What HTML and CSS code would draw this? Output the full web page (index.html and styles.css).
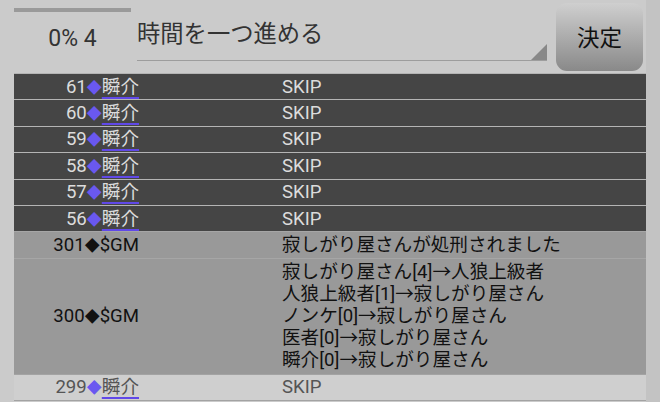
FILE: index.html
```html
<!DOCTYPE html>
<html lang="ja">
<head>
    <meta charset="UTF-8">
    <meta name="viewport" content="width=device-width, initial-scale=1.0">
    <title>ログ</title>
    <link rel="stylesheet" href="styles.css">
</head>
<body>
    <div class="screen">
        <div class="topbar">
            <div class="progress">
                <div class="progress-bar"></div>
                <div class="progress-text">0% 4</div>
            </div>
            <div class="select">
                <span class="select-text">時間を一つ進める</span>
                <span class="select-arrow"></span>
            </div>
            <button class="ok">決定</button>
        </div>

        <div class="log">
            <div class="row dark">
                <div class="who">61<span class="dia">◆</span><span class="name">瞬介</span></div>
                <div class="msg">SKIP</div>
            </div>
            <div class="row dark">
                <div class="who">60<span class="dia">◆</span><span class="name">瞬介</span></div>
                <div class="msg">SKIP</div>
            </div>
            <div class="row dark">
                <div class="who">59<span class="dia">◆</span><span class="name">瞬介</span></div>
                <div class="msg">SKIP</div>
            </div>
            <div class="row dark">
                <div class="who">58<span class="dia">◆</span><span class="name">瞬介</span></div>
                <div class="msg">SKIP</div>
            </div>
            <div class="row dark">
                <div class="who">57<span class="dia">◆</span><span class="name">瞬介</span></div>
                <div class="msg">SKIP</div>
            </div>
            <div class="row dark">
                <div class="who">56<span class="dia">◆</span><span class="name">瞬介</span></div>
                <div class="msg">SKIP</div>
            </div>
            <div class="row gm">
                <div class="who">301<span class="dia">◆</span>$GM</div>
                <div class="msg">寂しがり屋さんが処刑されました</div>
            </div>
            <div class="row gm multi">
                <div class="who">300<span class="dia">◆</span>$GM</div>
                <div class="msg">
                    寂しがり屋さん[4]→人狼上級者<br>
                    人狼上級者[1]→寂しがり屋さん<br>
                    ノンケ[0]→寂しがり屋さん<br>
                    医者[0]→寂しがり屋さん<br>
                    瞬介[0]→寂しがり屋さん
                </div>
            </div>
            <div class="row light">
                <div class="who">299<span class="dia">◆</span><span class="name">瞬介</span></div>
                <div class="msg">SKIP</div>
            </div>
        </div>
    </div>
</body>
</html>
```

FILE: styles.css
```css
body {
    margin: 0;
    background-color: #cbcbcb;
    font-family: Roboto, "Noto Sans CJK JP", sans-serif;
    color: #333;
}
.screen {
    width: 660px;
    height: 402px;
    overflow: hidden;
    background: linear-gradient(to right, #cbcbcb 646px, #c3c3c3 646px);
}
.topbar {
    display: flex;
    align-items: flex-start;
    height: 73px;
    padding-left: 14px;
}
.progress {
    width: 117px;
    padding-top: 8px;
}
.progress-bar {
    height: 4px;
    background-color: #9a9a9a;
}
.progress-text {
    margin-top: 12px;
    text-align: center;
    font-size: 23px;
    line-height: 30px;
    color: #333;
}
.select {
    position: relative;
    width: 410px;
    height: 60px;
    margin-left: 6px;
    border-bottom: 1px solid #9d9d9d;
}
.select-text {
    display: block;
    padding-top: 18px;
    font-size: 23.3px;
    line-height: 32px;
    color: #333;
}
.select-arrow {
    position: absolute;
    right: 0;
    bottom: 0;
    width: 0;
    height: 0;
    border-left: 16px solid transparent;
    border-bottom: 16px solid #888;
}
.ok {
    width: 87px;
    height: 68px;
    margin: 3px 0 0 9px;
    border: none;
    border-radius: 11px;
    background: linear-gradient(to bottom, #cfcfcf, #898989);
    font-family: "Noto Sans CJK JP", sans-serif;
    font-size: 22.5px;
    color: #111;
    padding: 0 0 2px;
}
.log {
    margin-left: 14px;
    width: 632px;
}
.row {
    display: grid;
    grid-template-columns: 125px 1fr;
    column-gap: 143px;
    border-top: 1px solid #b4b4b4;
    padding: 1.7px 0;
    font-size: 18.6px;
    line-height: 22px;
}
.row.dark {
    background-color: #454545;
    color: #dcdcdc;
}
.row.gm {
    background-color: #999;
    color: #111;
    border-top-color: #a6a6a6;
}
.row.multi {
    padding: 2.5px 0;
}
.row.multi .who {
    align-self: center;
}
.row.light {
    background-color: #cfcfcf;
    color: #555;
    border-top-color: #a3a3a3;
    border-bottom: 1px solid #a3a3a3;
}
.who {
    text-align: right;
    white-space: nowrap;
}
.dia {
    font-family: "Noto Sans CJK JP", sans-serif;
    font-size: 15px;
    line-height: 1;
    color: #6a58f0;
}
.gm .dia {
    color: #111;
}
.name {
    text-decoration: underline 2px #6048e8;
    text-underline-offset: 4px;
}
.msg {
    white-space: nowrap;
}
```
